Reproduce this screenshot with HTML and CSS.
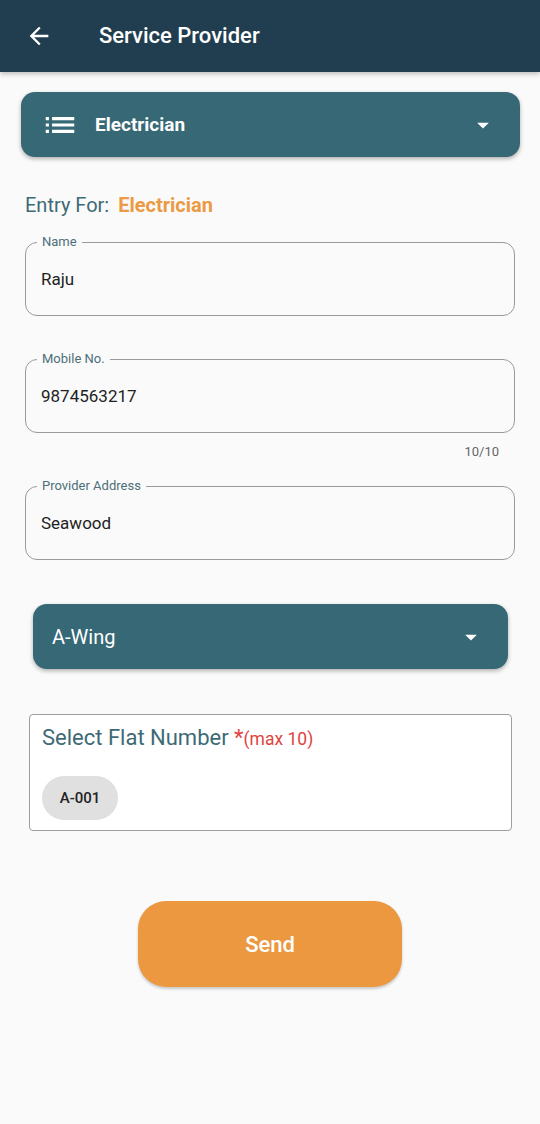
FILE: index.html
```html
<!DOCTYPE html>
<html lang="en">
<head>
    <meta charset="UTF-8">
    <meta name="viewport" content="width=device-width, initial-scale=1.0">
    <title>Service Provider</title>
    <link rel="stylesheet" href="styles.css">
</head>
<body>
    <header class="app-bar">
        <button class="back-btn" aria-label="Back">
            <svg width="24" height="24" viewBox="0 0 24 24"><path fill="#fff" d="M20 11H7.83l5.59-5.59L12 4l-8 8 8 8 1.41-1.41L7.83 13H20v-2z"/></svg>
        </button>
        <h1 class="app-title">Service Provider</h1>
    </header>

    <main class="content">
        <div class="dropdown category">
            <svg class="list-icon" width="38" height="38" viewBox="0 0 24 24"><path fill="#fff" d="M3 13h2v-2H3v2zm0 4h2v-2H3v2zm0-8h2V7H3v2zm4 4h14v-2H7v2zm0 4h14v-2H7v2zM7 7v2h14V7H7z"/></svg>
            <span class="dropdown-text bold">Electrician</span>
            <svg class="caret" width="24" height="24" viewBox="0 0 24 24"><path fill="#fff" d="M7 10l5 5 5-5z"/></svg>
        </div>

        <p class="entry-for">Entry For: <span class="entry-value">Electrician</span></p>

        <div class="field">
            <label class="field-label">Name</label>
            <div class="field-value">Raju</div>
        </div>

        <div class="field mobile">
            <label class="field-label">Mobile No.</label>
            <div class="field-value">9874563217</div>
        </div>
        <div class="counter">10/10</div>

        <div class="field address">
            <label class="field-label">Provider Address</label>
            <div class="field-value">Seawood</div>
        </div>

        <div class="dropdown wing">
            <span class="dropdown-text">A-Wing</span>
            <svg class="caret" width="24" height="24" viewBox="0 0 24 24"><path fill="#fff" d="M7 10l5 5 5-5z"/></svg>
        </div>

        <div class="flat-box">
            <div class="flat-title">Select Flat Number <span class="req">*<small>(max 10)</small></span></div>
            <div class="chips">
                <span class="chip">A-001</span>
            </div>
        </div>

        <div class="actions">
            <button class="send-btn">Send</button>
        </div>
    </main>
</body>
</html>
```

FILE: styles.css
```css
body {
    margin: 0;
    background-color: #fafafa;
    font-family: Roboto, "Noto Sans", Arial, sans-serif;
    color: #222;
}
.app-bar {
    height: 72px;
    background-color: #213e50;
    display: flex;
    align-items: center;
    box-shadow: 0 2px 5px rgba(0,0,0,0.25);
}
.back-btn {
    background: none;
    border: none;
    padding: 0;
    margin-left: 25px;
    width: 28px;
    height: 28px;
    display: flex;
    align-items: center;
    justify-content: center;
}
.back-btn svg {
    width: 28px;
    height: 28px;
}
.app-title {
    margin: 0 0 0 46px;
    color: #fff;
    font-size: 22px;
    font-weight: 500;
    padding-bottom: 2px;
}
.content {
    padding: 20px 20px 40px 21px;
}
.dropdown {
    display: flex;
    align-items: center;
    height: 65px;
    background-color: #366876;
    border-radius: 14px;
    box-shadow: 0 2px 4px rgba(0,0,0,0.3);
    color: #fff;
    box-sizing: border-box;
}
.category {
    padding: 0 23px 0 20px;
}
.list-icon {
    margin-right: 16px;
}
.dropdown-text {
    flex: 1;
    font-size: 20px;
}
.dropdown-text.bold {
    font-size: 19px;
    font-weight: 700;
}
.caret {
    width: 28px;
    height: 28px;
}
.entry-for {
    margin: 36px 0 0 4px;
    font-size: 20px;
    line-height: 24px;
    color: #3e6a75;
}
.entry-value {
    color: #ec9a45;
    font-weight: 700;
    margin-left: 4px;
}
.field {
    position: relative;
    margin: 25px 5px 0 4px;
    height: 74px;
    border: 1px solid #9a9a9a;
    border-radius: 12px;
    display: flex;
    align-items: center;
    box-sizing: border-box;
}
.field.mobile {
    margin-top: 43px;
}
.field.address {
    margin-top: 26px;
}
.field-label {
    position: absolute;
    top: -9px;
    left: 11px;
    padding: 0 5px;
    background-color: #fafafa;
    font-size: 13px;
    line-height: 16px;
    color: #4d6f79;
}
.field-value {
    padding-left: 15px;
    font-size: 17px;
    color: #222;
}
.counter {
    text-align: right;
    margin: 11px 21px 0 0;
    font-size: 13px;
    line-height: 16px;
    color: #666;
}
.wing {
    margin: 44px 12px 0 12px;
    padding: 0 23px 0 19px;
}
.wing .dropdown-text {
    font-size: 20px;
}
.flat-box {
    margin: 45px 8px 0 8px;
    height: 117px;
    background-color: #fff;
    border: 1px solid #9e9e9e;
    border-radius: 4px;
    box-sizing: border-box;
    padding: 9px 12px 0 12px;
}
.flat-title {
    font-size: 22px;
    line-height: 28px;
    color: #3e6a75;
}
.req {
    color: #e0443e;
}
.req small {
    font-size: 17.5px;
}
.chips {
    margin-top: 23px;
    display: flex;
    gap: 8px;
}
.chip {
    display: inline-flex;
    align-items: center;
    justify-content: center;
    width: 76px;
    height: 44px;
    border-radius: 22px;
    background-color: #e0e0e0;
    font-size: 15px;
    font-weight: 500;
    color: #222;
}
.actions {
    display: flex;
    justify-content: center;
    margin-top: 70px;
    padding-right: 1px;
}
.send-btn {
    width: 264px;
    height: 86px;
    border: none;
    border-radius: 28px;
    background-color: #ec9840;
    color: #fff;
    font-family: Roboto, Arial, sans-serif;
    font-size: 22px;
    font-weight: 500;
    box-shadow: 0 2px 3px rgba(0,0,0,0.2);
}
```
